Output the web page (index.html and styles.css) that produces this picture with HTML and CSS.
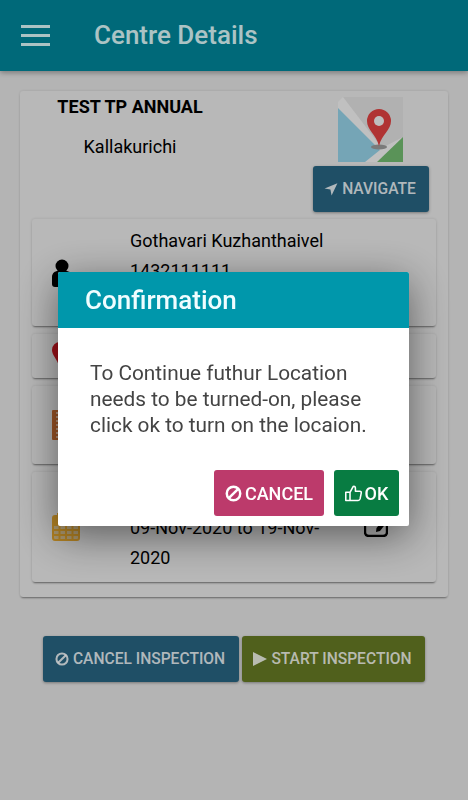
FILE: index.html
```html
<!DOCTYPE html>
<html lang="en">
<head>
    <meta charset="UTF-8">
    <meta name="viewport" content="width=device-width, initial-scale=1.0">
    <title>Centre Details</title>
    <link rel="stylesheet" href="styles.css">
</head>
<body>
    <header class="topbar">
        <div class="menu-icon"><span></span><span></span><span></span></div>
        <div class="topbar-title">Centre Details</div>
    </header>

    <main class="content">
        <section class="centre-card">
            <div class="centre-head">
                <div class="centre-name">
                    <div class="centre-title">TEST TP ANNUAL</div>
                    <div class="centre-city">Kallakurichi</div>
                </div>
                <div class="centre-map">
                    <svg class="map-icon" viewBox="0 0 65 65">
                        <polygon points="5,0 65,0 65,40 40,65 27,65 0,11 0,5" fill="#f1f1f1"/>
                        <polygon points="5,0 65,0 65,40 44,51" fill="#dedede"/>
                        <polygon points="0,11 42,53 27,65 0,65" fill="#93cfe4"/>
                        <polygon points="65,40 65,65 39,65" fill="#71b86f"/>
                        <ellipse cx="41" cy="50" rx="8" ry="2.5" fill="#999"/>
                        <path d="M41 49 C38 37 29 33 29 24 A12 12 0 0 1 53 24 C53 33 44 37 41 49 Z" fill="#dc4040"/>
                        <circle cx="41" cy="24" r="5" fill="#eee"/>
                    </svg>
                    <button class="btn btn-blue btn-nav">
                        <svg class="ico" viewBox="0 0 24 24"><polygon points="23,2 13,23 11,13 1,11" fill="currentColor"/></svg>NAVIGATE
                    </button>
                </div>
            </div>

            <div class="row row-contact">
                <div class="row-icon">
                    <svg viewBox="0 0 20 28" width="20" height="28"><circle cx="10" cy="7" r="6.5" fill="#000"/><path d="M0 25 V18 C0 14 3 12 6 12 H14 C17 12 20 14 20 18 V25 Q20 28 17 28 H3 Q0 28 0 25 Z" fill="#000"/></svg>
                </div>
                <div class="row-text">
                    <div>Gothavari Kuzhanthaivel</div>
                    <div>1432111111</div>
                </div>
            </div>
            <div class="row row-address">
                <div class="row-icon">
                    <svg class="pin-icon" viewBox="0 0 16 24" width="16" height="24"><path d="M7 24 C5 17 0 13 0 8 A8 8 0 0 1 16 8 C16 13 10 17 7 24 Z" fill="#c8141f"/></svg>
                </div>
            </div>
            <div class="row row-book">
                <div class="row-icon">
                    <svg viewBox="0 0 24 30" width="24" height="30"><rect width="24" height="30" rx="1" fill="#c46a30"/><path d="M4 3h3M4 7h3M4 11h3M4 15h3M4 19h3M4 23h3M4 27h3" stroke="#e6d2c0" stroke-width="1.5"/></svg>
                </div>
            </div>
            <div class="row row-dates">
                <div class="row-icon">
                    <svg viewBox="0 0 28 28" width="28" height="28">
                        <path d="M3 3 H25 Q27 3 27 5 V25 Q27 27 25 27 H3 Q1 27 1 25 V5 Q1 3 3 3 Z" fill="#d8c08e" stroke="#e2a52e" stroke-width="2"/>
                        <path d="M1 12 H27 M1 17 H27 M1 22 H27 M7.5 12 V27 M14 12 V27 M20.500 12 V27" fill="none" stroke="#e2a52e" stroke-width="2"/>
                        <rect x="1" y="3" width="26" height="9" fill="#e2a52e"/>
                        <rect x="5" y="0" width="4" height="6" fill="#e2a52e"/>
                    </svg>
                </div>
                <div class="row-text">
                    <div>09-Nov-2020 to 19-Nov-<br>2020</div>
                </div>
                <svg class="edit-icon" viewBox="0 0 24 28" width="24" height="28"><path d="M10 8 H5 Q1 8 1 12 V23 Q1 27 5 27 H19 Q23 27 23 23 V13" fill="none" stroke="#000" stroke-width="2.400"/><path d="M12 23 L12.500 19 L20 10 L23 13 L16 22 Z" fill="#000"/></svg>
            </div>
        </section>

        <div class="actions">
            <button class="btn btn-blue btn-action">
                <svg class="ico" viewBox="0 0 24 24"><circle cx="12" cy="12" r="9.500" fill="none" stroke="currentColor" stroke-width="3.5"/><path d="M5 19 L19 5" stroke="currentColor" stroke-width="3.5"/></svg>CANCEL INSPECTION
            </button>
            <button class="btn btn-olive btn-action">
                <svg class="ico" viewBox="0 0 24 24"><polygon points="0,0 24,12 0,24" fill="currentColor"/></svg>START INSPECTION
            </button>
        </div>
    </main>

    <div class="backdrop">
        <div class="dialog">
            <div class="dialog-head">Confirmation</div>
            <div class="dialog-body">To Continue futhur Location needs to be turned-on, please click ok to turn on the locaion.</div>
            <div class="dialog-foot">
                <button class="btn btn-pink btn-dialog">
                    <svg class="ico" viewBox="0 0 24 24"><circle cx="12" cy="12" r="9.500" fill="none" stroke="currentColor" stroke-width="3.5"/><path d="M5 19 L19 5" stroke="currentColor" stroke-width="3.5"/></svg>CANCEL
                </button>
                <button class="btn btn-green btn-dialog">
                    <svg class="ico" viewBox="1 2 22 21"><path d="M7.500 11 L11.500 3.500 Q14.500 2.500 14.500 6 V9.500 H20 Q22.500 9.500 22 12 L20.500 19.500 Q20 21.500 18 21.500 H7.500 Z M2 11 H7.500 V21.500 H2 Z" fill="none" stroke="currentColor" stroke-width="2" stroke-linejoin="round"/></svg>OK
                </button>
            </div>
        </div>
    </div>
</body>
</html>
```

FILE: styles.css
```css
* {
    box-sizing: border-box;
}
html, body {
    height: 100%;
}
body {
    margin: 0;
    font-family: Roboto, "Liberation Sans", sans-serif;
    background: #e2e2e2;
    color: #000;
    overflow: hidden;
}
.topbar {
    height: 71px;
    background: #008498;
    display: flex;
    align-items: center;
    box-shadow: 0 2px 5px rgba(0,0,0,0.3);
}
.menu-icon {
    width: 29px;
    margin-left: 21px;
    display: flex;
    flex-direction: column;
    gap: 6px;
}
.menu-icon span {
    height: 3px;
    background: #d8f4f6;
}
.topbar-title {
    margin-left: 44px;
    font-size: 26px;
    font-weight: 500;
    color: #d8f4f6;
    margin-top: -2px;
}
.content {
    padding: 20px;
}
.centre-card {
    background: #e6e6e6;
    border-radius: 3px;
    padding: 6px 12px 15px;
    box-shadow: 0 2px 2px -1px rgba(0,0,0,0.4), 0 0 3px rgba(0,0,0,0.12);
}
.centre-head {
    display: flex;
    justify-content: space-between;
    padding-bottom: 7px;
}
.centre-name {
    width: 196px;
    text-align: center;
    font-size: 18px;
}
.centre-title {
    font-weight: 700;
    line-height: 20px;
    margin-bottom: 20px;
}
.centre-city {
    line-height: 20px;
}
.centre-map {
    display: flex;
    flex-direction: column;
    align-items: center;
    padding-right: 7px;
}
.map-icon {
    display: block;
    width: 65px;
    height: 65px;
    margin-bottom: 4px;
    margin-right: 1px;
}
.btn {
    display: inline-flex;
    align-items: center;
    justify-content: center;
    border: 0;
    border-radius: 3px;
    height: 46px;
    padding: 0;
    font-family: inherit;
    font-size: 15.6px;
    font-weight: 500;
    color: rgba(255,255,255,0.85);
    box-shadow: 0 1px 3px rgba(0,0,0,0.35);
}
.ico {
    width: 14px;
    height: 14px;
    margin-right: 4px;
    flex: none;
}
.btn-blue {
    background: #276380;
}
.btn-olive {
    background: #647823;
}
.btn-pink {
    background: #bc3a6b;
    color: #fff;
    box-shadow: none;
}
.btn-green {
    background: #087c42;
    color: #fff;
    box-shadow: none;
}
.btn-nav {
    width: 116px;
    padding-right: 2px;
}
.btn-action {
    flex: none;
    padding-right: 2px;
}
.actions .btn-blue {
    width: 196px;
}
.actions .btn-olive {
    width: 183px;
}
.row {
    display: flex;
    align-items: center;
    background: #e6e6e6;
    border-radius: 3px;
    padding-left: 20px;
    margin-bottom: 8px;
    font-size: 18px;
    box-shadow: 0 2px 2px -1px rgba(0,0,0,0.45), 0 0 3px rgba(0,0,0,0.12);
}
.row:last-child {
    margin-bottom: 0;
}
.row-icon {
    flex: none;
    width: 78px;
    display: flex;
}
.pin-icon {
    margin-top: -4px;
}
.row-contact {
    height: 107px;
}
.row-address {
    height: 44px;
}
.row-book {
    height: 78px;
}
.row-dates {
    height: 110px;
}
.row-text {
    flex: none;
    width: 225px;
    line-height: 30px;
}
.row-contact .row-text {
    align-self: flex-start;
    padding-top: 7px;
}
.row-dates .row-text {
    align-self: flex-end;
    padding-bottom: 9px;
}
.edit-icon {
    flex: none;
    margin-left: 9px;
    margin-bottom: 8px;
}
.actions {
    display: flex;
    justify-content: center;
    gap: 3px;
    margin-top: 39px;
}
.backdrop {
    position: fixed;
    inset: 0;
    background: rgba(0,0,0,0.2);
    display: flex;
    align-items: center;
    justify-content: center;
}
.dialog {
    width: 351px;
    height: 254px;
    background: #fff;
    border-radius: 2px;
    box-shadow: 0 10px 40px rgba(0,0,0,0.5);
    margin: -2px 1px 0 0;
}
.dialog-head {
    height: 56px;
    background: #0097ab;
    color: #f0fdff;
    font-size: 26px;
    font-weight: 500;
    line-height: 56px;
    padding-left: 27px;
    border-radius: 2px 2px 0 0;
}
.dialog-body {
    padding: 32px 32px 0;
    height: 142px;
    font-size: 20.8px;
    line-height: 26px;
    color: #444;
}
.dialog-foot {
    display: flex;
    justify-content: flex-end;
    gap: 10px;
    padding-right: 10px;
}
.btn-dialog {
    font-size: 18px;
}
.btn-dialog .ico {
    width: 17px;
    height: 17px;
    margin-right: 3px;
}
.btn-pink.btn-dialog {
    width: 110px;
}
.btn-green.btn-dialog {
    width: 65px;
}
```
